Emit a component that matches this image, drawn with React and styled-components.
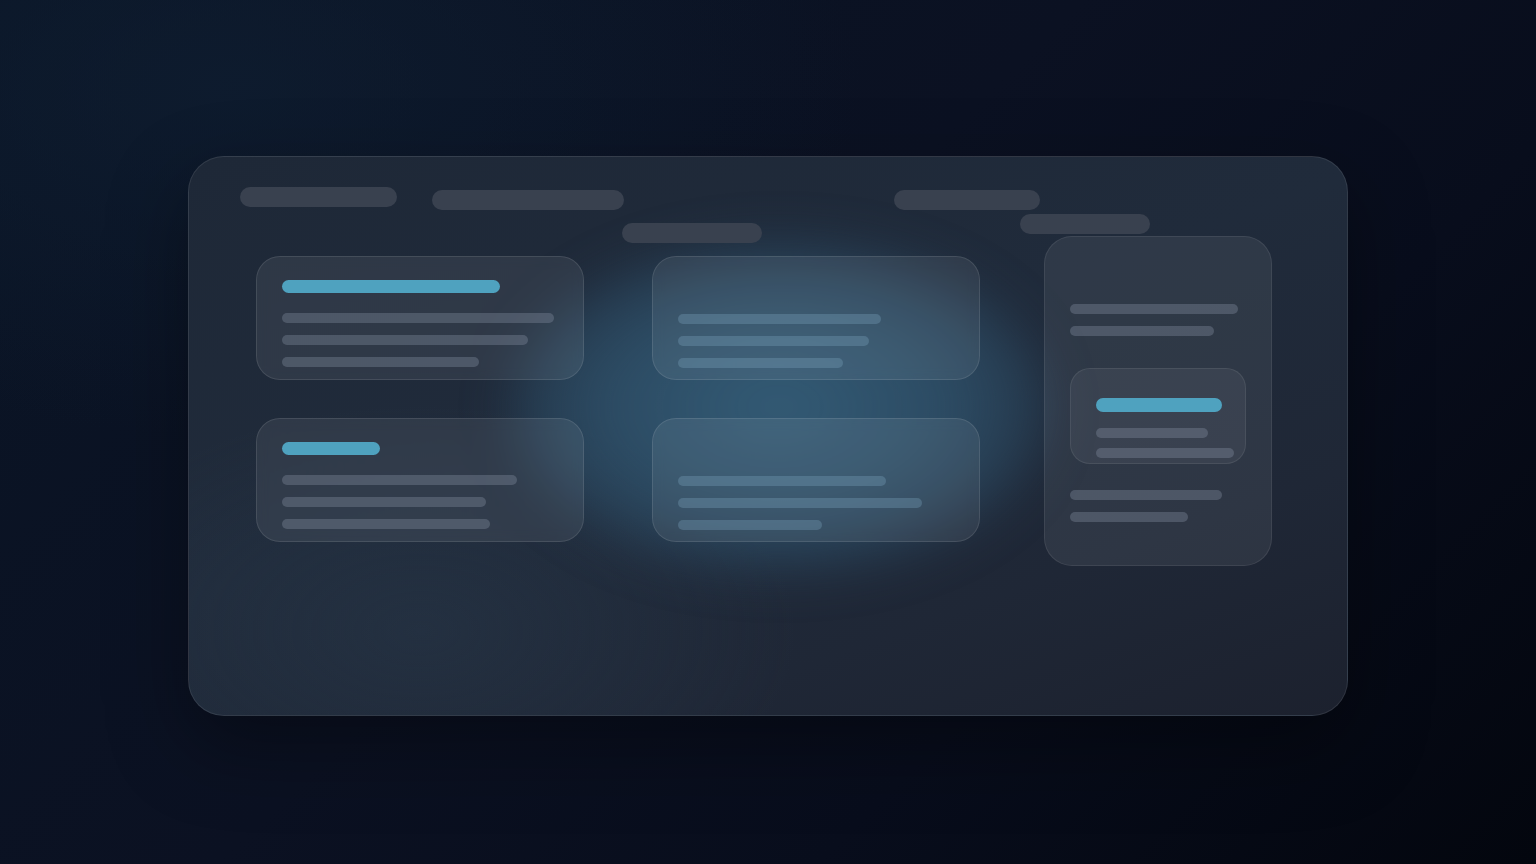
import React from 'react';
import styled, { createGlobalStyle } from 'styled-components';

const GlobalStyle = createGlobalStyle`
  html, body {
    margin: 0;
    padding: 0;
    height: 100%;
  }
  body {
    font-family: Inter, "Liberation Sans", sans-serif;
    background: #070e1c;
  }
`;

const Page = styled.main`
  width: 1536px;
  height: 864px;
  display: flex;
  align-items: center;
  justify-content: center;
  background:
    radial-gradient(ellipse 900px 500px at 15% 10%, rgba(16, 32, 52, 0.6), transparent 70%),
    linear-gradient(135deg, #0a1526 0%, #0b1122 45%, #080d1c 70%, #03060e 100%);
  overflow: hidden;
`;

const Panel = styled.section`
  position: relative;
  width: 1160px;
  height: 560px;
  box-sizing: border-box;
  border-radius: 36px;
  border: 1px solid rgba(255, 255, 255, 0.09);
  background:
    radial-gradient(ellipse 500px 300px at 20% 85%, rgba(40, 56, 74, 0.45), transparent 75%),
    linear-gradient(160deg, #1e2837 0%, #202b3b 45%, #1f2736 75%, #1c212e 100%);
  box-shadow: 0 30px 80px rgba(0, 0, 0, 0.35);
  overflow: hidden;
  display: flex;
  flex-direction: column;
  margin-top: 8px;

  &::before {
    content: '';
    position: absolute;
    left: 320px;
    top: 85px;
    width: 540px;
    height: 330px;
    border-radius: 50%;
    background: radial-gradient(
      ellipse at center,
      rgba(58, 108, 138, 0.75) 0%,
      rgba(54, 100, 130, 0.58) 45%,
      rgba(48, 88, 118, 0.22) 75%,
      transparent 100%
    );
    filter: blur(24px);
    pointer-events: none;
  }
`;

const Header = styled.header`
  position: relative;
  display: flex;
  align-items: flex-start;
  padding: 30px 0 0 51px;
  height: 53px;
  box-sizing: border-box;
`;

const Pill = styled.div`
  width: ${p => p.$w}px;
  height: 20px;
  border-radius: 10px;
  background: #39414f;
  margin-left: ${p => p.$ml || 0}px;
  margin-top: ${p => p.$mt || 0}px;
  flex-shrink: 0;
`;

const Body = styled.div`
  position: relative;
  display: flex;
  align-items: flex-start;
  padding-left: 67px;
`;

const Column = styled.div`
  display: flex;
  flex-direction: column;
  align-items: flex-start;
  width: ${p => p.$w}px;
  margin-left: ${p => p.$ml || 0}px;
  padding-top: ${p => p.$pt || 0}px;
  gap: ${p => p.$gap || 0}px;
  flex-shrink: 0;
`;

const Card = styled.article`
  box-sizing: border-box;
  width: 328px;
  height: 124px;
  border-radius: 24px;
  border: 1px solid rgba(255, 255, 255, 0.1);
  background: rgba(255, 255, 255, 0.075);
  backdrop-filter: blur(6px);
  padding: ${p => (p.$accent ? 23 : 57)}px 25px 0 25px;
  margin-left: ${p => p.$ml || 0}px;
  margin-top: ${p => p.$mt || 0}px;
  display: flex;
  flex-direction: column;
  align-items: flex-start;
`;

const SideCard = styled.aside`
  box-sizing: border-box;
  width: 228px;
  height: 330px;
  margin-left: 24px;
  margin-top: 2px;
  border-radius: 28px;
  border: 1px solid rgba(255, 255, 255, 0.08);
  background: rgba(255, 255, 255, 0.07);
  padding: 67px 25px 0 25px;
  display: flex;
  flex-direction: column;
  align-items: flex-start;
`;

const InnerCard = styled.div`
  box-sizing: border-box;
  width: 176px;
  height: 96px;
  margin: 32px 0 26px 0;
  border-radius: 20px;
  border: 1px solid rgba(255, 255, 255, 0.08);
  background: rgba(255, 255, 255, 0.055);
  padding: 29px 0 0 25px;
  display: flex;
  flex-direction: column;
  align-items: flex-start;
  overflow: hidden;
`;

const Accent = styled.div`
  width: ${p => p.$w}px;
  height: 14px;
  border-radius: 7px;
  background: #4fa2bf;
  margin-bottom: ${p => p.$mb || 20}px;
`;

const Line = styled.div`
  width: ${p => p.$w}px;
  height: 10px;
  border-radius: 5px;
  background: ${p => (p.$glow ? 'rgba(120, 160, 185, 0.35)' : 'rgba(130, 140, 158, 0.38)')};
  margin-bottom: ${p => p.$mb ?? 12}px;
  flex-shrink: 0;
`;

const cardsLeft = [
  { accent: 218, lines: [272, 246, 197] },
  { accent: 98, lines: [235, 204, 208] },
];

const cardsMid = [
  { lines: [203, 191, 165] },
  { lines: [208, 244, 144] },
];

export default function App() {
  return (
    <>
      <GlobalStyle />
      <Page>
        <Panel>
          <Header>
            <Pill $w={157} />
            <Pill $w={192} $ml={35} $mt={3} />
            <Pill $w={146} $ml={270} $mt={3} />
          </Header>
          <Body>
            <Column $w={328} $pt={46} $gap={38}>
              {cardsLeft.map((c, i) => (
                <Card key={i} $accent>
                  <Accent $w={c.accent} />
                  {c.lines.map((w, j) => (
                    <Line key={j} $w={w} />
                  ))}
                </Card>
              ))}
            </Column>
            <Column $w={358} $ml={38}>
              <Pill $w={140} $mt={13} />
              <Card $ml={30} $mt={13}>
                {cardsMid[0].lines.map((w, j) => (
                  <Line key={j} $w={w} $glow />
                ))}
              </Card>
              <Card $ml={30} $mt={38}>
                {cardsMid[1].lines.map((w, j) => (
                  <Line key={j} $w={w} $glow />
                ))}
              </Card>
            </Column>
            <Column $w={260} $ml={40}>
              <Pill $w={130} $mt={4} />
              <SideCard>
                <Line $w={168} />
                <Line $w={144} $mb={0} />
                <InnerCard>
                  <Accent $w={126} $mb={16} />
                  <Line $w={112} $mb={10} />
                  <Line $w={138} $mb={0} />
                </InnerCard>
                <Line $w={152} />
                <Line $w={118} />
              </SideCard>
            </Column>
          </Body>
        </Panel>
      </Page>
    </>
  );
}
